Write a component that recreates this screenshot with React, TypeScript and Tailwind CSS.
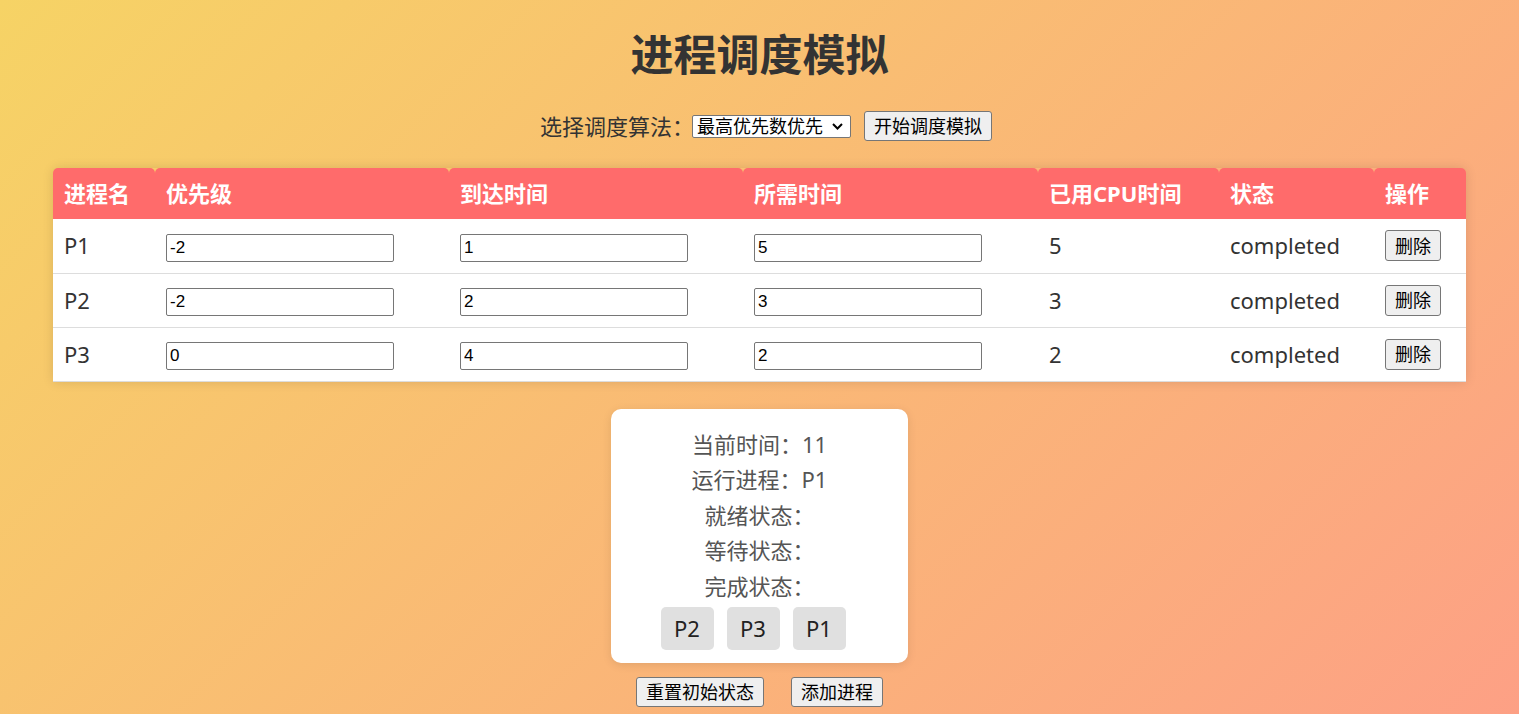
import React, { useState } from 'react';

type Proc = {
  name: string;
  priority: number;
  arrival: number;
  burst: number;
  used: number;
  status: string;
};

const initial: Proc[] = [
  { name: 'P1', priority: -2, arrival: 1, burst: 5, used: 5, status: 'completed' },
  { name: 'P2', priority: -2, arrival: 2, burst: 3, used: 3, status: 'completed' },
  { name: 'P3', priority: 0, arrival: 4, burst: 2, used: 2, status: 'completed' },
];

const btn =
  'h-[30px] bg-[#efefef] border border-[#767676] rounded-[3px] text-[18px] leading-none text-black';

const input =
  'mt-[4px] w-[228px] h-[28px] px-[3px] bg-white border border-[#767676] rounded-[2px] text-[17px] text-black font-["Liberation_Sans",Arial,sans-serif] outline-none';

export default function App() {
  const [procs, setProcs] = useState<Proc[]>(initial);
  const [algo, setAlgo] = useState('priority');

  const update = (i: number, key: 'priority' | 'arrival' | 'burst', value: string) => {
    setProcs((prev) => prev.map((p, idx) => (idx === i ? { ...p, [key]: Number(value) } : p)));
  };

  return (
    <div className='min-h-screen bg-[linear-gradient(135deg,#f6d365_0%,#fda085_100%)] font-["Noto_Sans","Noto_Sans_CJK_SC",sans-serif] text-[#333] pb-[10px]'>
      <h1 className="pt-[30px] text-center text-[43px] leading-[50px] font-bold text-[#333]">
        进程调度模拟
      </h1>

      <div className="mt-[31px] pl-[13px] flex items-center justify-center h-[30px]">
        <span className="w-[152px] text-[22px] leading-[30px] whitespace-nowrap">选择调度算法：</span>
        <div className="relative">
          <select
            value={algo}
            onChange={(e) => setAlgo(e.target.value)}
            className="block appearance-none w-[159px] h-[23px] pl-[4px] bg-white border border-[#767676] rounded-[2px] text-[18px] leading-[21px] text-black outline-none"
          >
            <option value="priority">最高优先数优先</option>
            <option value="fcfs">先来先服务</option>
          </select>
          <svg
            className="absolute right-[8px] top-[8px] pointer-events-none"
            width="11"
            height="7"
            viewBox="0 0 11 7"
          >
            <path d="M1 1l4.5 4.5L10 1" fill="none" stroke="#000" strokeWidth="2" />
          </svg>
        </div>
        <button className={`${btn} w-[128px] ml-[13px]`}>开始调度模拟</button>
      </div>

      <div className="mt-[27px] mx-auto w-[1413px] shadow-[0_0_12px_rgba(0,0,0,0.12)] rounded-t-[5px]">
        <table className="w-full table-fixed border-collapse">
          <colgroup>
            <col className="w-[102px]" />
            <col className="w-[294px]" />
            <col className="w-[294px]" />
            <col className="w-[295px]" />
            <col className="w-[181px]" />
            <col className="w-[155px]" />
            <col className="w-[92px]" />
          </colgroup>
          <thead>
            <tr>
              {['进程名', '优先级', '到达时间', '所需时间', '已用CPU时间', '状态', '操作'].map((h) => (
                <th
                  key={h}
                  className="h-[51px] px-[11px] text-left text-[22px] font-bold text-white bg-[#ff6b6b] rounded-t-[5px] whitespace-nowrap"
                >
                  {h}
                </th>
              ))}
            </tr>
          </thead>
          <tbody className="bg-white">
            {procs.map((p, i) => (
              <tr key={p.name} className="h-[54px] border-b border-[#ddd]">
                <td className="px-[11px] text-[22px]">{p.name}</td>
                <td className="px-[11px]">
                  <input className={input} value={p.priority} onChange={(e) => update(i, 'priority', e.target.value)} />
                </td>
                <td className="px-[11px]">
                  <input className={input} value={p.arrival} onChange={(e) => update(i, 'arrival', e.target.value)} />
                </td>
                <td className="px-[11px]">
                  <input className={input} value={p.burst} onChange={(e) => update(i, 'burst', e.target.value)} />
                </td>
                <td className="px-[11px] text-[22px]">{p.used}</td>
                <td className="px-[11px] text-[22px]">{p.status}</td>
                <td className="px-[11px]">
                  <button
                    className="w-[56px] h-[31px] bg-[#efefef] border border-[#767676] rounded-[3px] text-[18px] leading-none text-black"
                    onClick={() => setProcs((prev) => prev.filter((_, idx) => idx !== i))}
                  >
                    删除
                  </button>
                </td>
              </tr>
            ))}
          </tbody>
        </table>
      </div>

      <div className="mt-[27px] mx-auto w-[297px] bg-white rounded-[10px] shadow-[0_2px_10px_rgba(0,0,0,0.1)] pt-[18px] pb-[13px] text-center text-[22px] text-[#555]">
        <div className="leading-[35.5px]">当前时间：11</div>
        <div className="leading-[35.5px]">运行进程：P1</div>
        <div className="leading-[35.5px]">就绪状态：</div>
        <div className="leading-[35.5px]">等待状态：</div>
        <div className="leading-[35.5px]">完成状态：</div>
        <div className="mt-[3px] flex justify-center">
          {['P2', 'P3', 'P1'].map((n) => (
            <div
              key={n}
              className="mr-[13px] w-[53px] h-[43px] flex items-center justify-center bg-[#e0e0e0] rounded-[5px] text-[22px] text-[#222]"
            >
              {n}
            </div>
          ))}
        </div>
      </div>

      <div className="mt-[14px] flex justify-center gap-[27px]">
        <button className={`${btn} w-[128px]`}>重置初始状态</button>
        <button className={`${btn} w-[92px]`}>添加进程</button>
      </div>
    </div>
  );
}
